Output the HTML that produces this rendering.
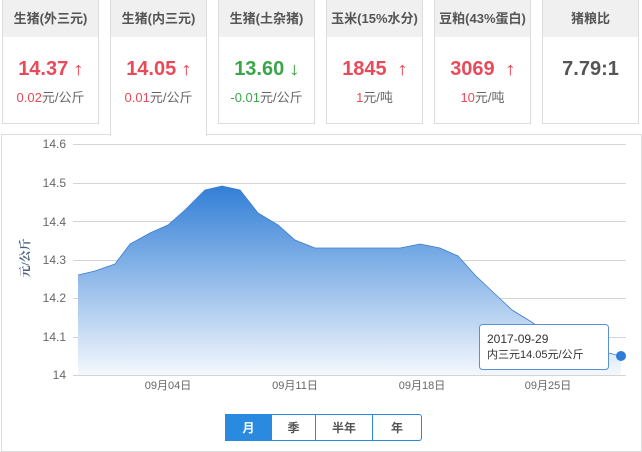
<!DOCTYPE html>
<html><head><meta charset="utf-8"><style>
body{margin:0;width:642px;height:452px;background:#fff;font-family:"Liberation Sans","Noto Sans CJK SC",sans-serif;position:relative;overflow:hidden}
.card{position:absolute;top:0;width:97px;height:124px;border:1px solid #ddd;border-top:none;box-sizing:border-box;background:#fff}
.card .h{height:37px;background:#f0f0f0;text-align:center;line-height:37px;font-size:13px;font-weight:bold;color:#555}
.card .v{text-align:center;font-size:20px;font-weight:bold;margin-top:20px;line-height:24px}
.card .s{text-align:center;font-size:13px;color:#666;margin-top:6px}
.r{color:#e94a5a}.g{color:#3aa64a}
.a{display:inline-block;font-size:18px;font-weight:900;transform:scaleX(1.3)}
.active{height:136px;border-bottom:none;z-index:2}
.panel{position:absolute;left:1px;top:134px;width:641px;height:318px;border:1px solid #ddd;box-sizing:border-box}
.btns{position:absolute;left:225px;top:414px;height:27px;display:flex;font-size:12px;font-weight:bold;color:#555}
.btns div{border:1px solid #2a8ae0;border-left:none;text-align:center;line-height:26px}
</style></head><body>
<div class="card" style="left:2px"><div class="h">生猪(外三元)</div><div class="v r">14.37 <span class="a">↑</span></div><div class="s"><span class="r">0.02</span>元/公斤</div></div>
<div class="card active" style="left:110px"><div class="h">生猪(内三元)</div><div class="v r">14.05 <span class="a">↑</span></div><div class="s"><span class="r">0.01</span>元/公斤</div></div>
<div class="card" style="left:218px"><div class="h">生猪(土杂猪)</div><div class="v g">13.60 <span class="a">↓</span></div><div class="s"><span class="g">-0.01</span>元/公斤</div></div>
<div class="card" style="left:326px"><div class="h">玉米(15%水分)</div><div class="v r">1845 &nbsp;<span class="a">↑</span></div><div class="s"><span class="r">1</span>元/吨</div></div>
<div class="card" style="left:434px"><div class="h">豆粕(43%蛋白)</div><div class="v r">3069 &nbsp;<span class="a">↑</span></div><div class="s"><span class="r">10</span>元/吨</div></div>
<div class="card" style="left:542px"><div class="h">猪粮比</div><div class="v" style="color:#555">7.79:1</div></div>
<div class="panel"></div>
<svg width="642" height="452" style="position:absolute;left:0;top:0;z-index:3" font-family="Liberation Sans, Noto Sans CJK SC, sans-serif">
<defs><linearGradient id="gr" x1="0" y1="183" x2="0" y2="375" gradientUnits="userSpaceOnUse"><stop offset="0" stop-color="#2f7dd6"/><stop offset="1" stop-color="#f4f8fd"/></linearGradient></defs>
<g stroke="#d4d4d4" stroke-width="1">
<line x1="73" y1="144.5" x2="626" y2="144.5"/><line x1="73" y1="183.5" x2="626" y2="183.5"/><line x1="73" y1="221.5" x2="626" y2="221.5"/><line x1="73" y1="260.5" x2="626" y2="260.5"/><line x1="73" y1="298.5" x2="626" y2="298.5"/><line x1="73" y1="337.5" x2="626" y2="337.5"/><line x1="73" y1="375.5" x2="626" y2="375.5"/></g>
<path d="M78 275 L95 271 L115 264 L130 244 L150 233 L168 225 L185 210 L205 190 L222 186 L240 190 L258 213 L278 225 L295 240 L315 248 L400 248 L420 244 L440 248 L458 256 L475 275 L495 294 L512 310 L530 321 L548 333 L570 343 L600 351 L621 356 L621 375 L78 375 Z" fill="url(#gr)"/>
<path d="M78 275 L95 271 L115 264 L130 244 L150 233 L168 225 L185 210 L205 190 L222 186 L240 190 L258 213 L278 225 L295 240 L315 248 L400 248 L420 244 L440 248 L458 256 L475 275 L495 294 L512 310 L530 321 L548 333 L570 343 L600 351 L621 356" fill="none" stroke="#3a7fcf" stroke-width="0.8"/>
<g fill="#666" font-size="12" text-anchor="end"><text x="66" y="148">14.6</text><text x="66" y="187">14.5</text><text x="66" y="226">14.4</text><text x="66" y="264">14.3</text><text x="66" y="302">14.2</text><text x="66" y="341">14.1</text><text x="66" y="379">14</text></g>
<text transform="translate(29 258) rotate(-90)" font-size="12" font-weight="bold" fill="#4a5f80" text-anchor="middle" font-family="Liberation Serif, Noto Serif CJK SC, serif">元/公斤</text>
<g fill="#666" font-size="11" text-anchor="middle"><text x="168" y="389">09月04日</text><text x="295" y="389">09月11日</text><text x="422" y="389">09月18日</text><text x="548" y="389">09月25日</text></g>
<circle cx="621" cy="356" r="5" fill="#2f7dd6"/>
<rect x="479.5" y="324.5" width="129" height="45" rx="3" fill="#fff" stroke="#5b8fd6"/>
<text x="487" y="343" font-size="12" fill="#333">2017-09-29</text>
<text x="487" y="358" font-size="11" fill="#333">内三元14.05元/公斤</text>
</svg>
<div class="btns"><div style="width:45px;background:#2a8ae0;color:#fff;border-left:1px solid #2a8ae0">月</div><div style="width:43px">季</div><div style="width:56px">半年</div><div style="width:48px;border-radius:0 3px 3px 0">年</div></div>
</body></html>
